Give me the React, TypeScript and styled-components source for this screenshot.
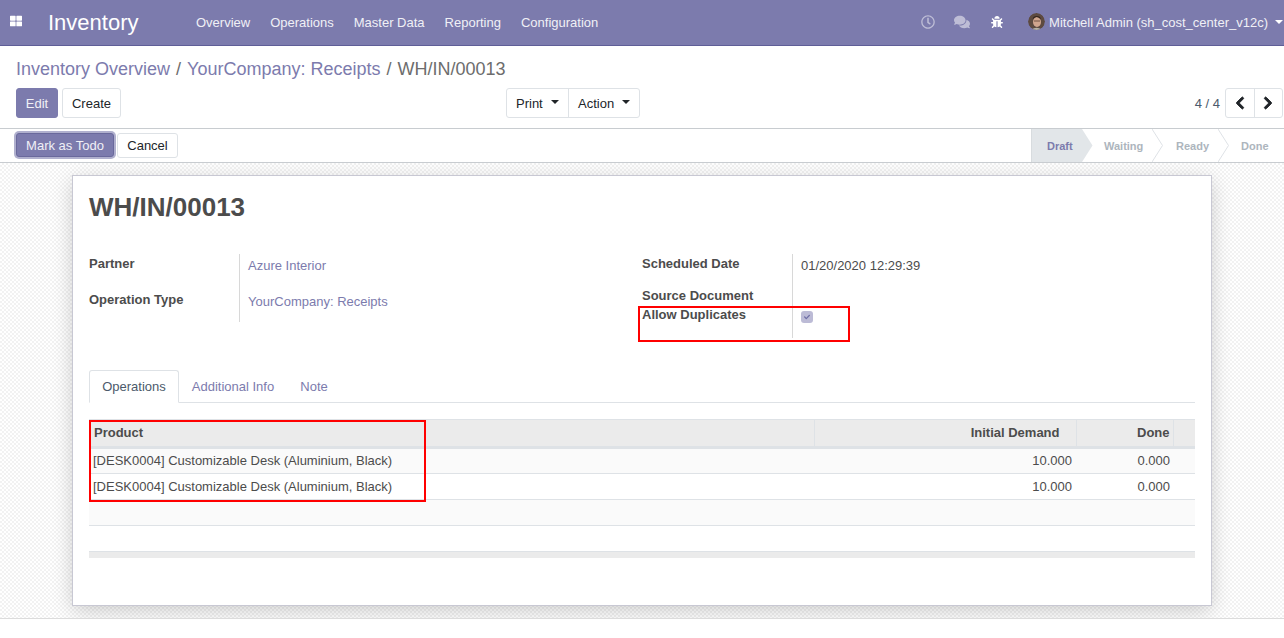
import React from "react";
import styled, { createGlobalStyle } from "styled-components";
import { FaThLarge, FaRegClock, FaComments, FaBug, FaChevronLeft, FaChevronRight, FaCheck } from "react-icons/fa";

const Global = createGlobalStyle`
  html, body { margin: 0; padding: 0; background: #fff; }
  body { font-family: "Liberation Sans", Arial, sans-serif; font-size: 13px; color: #4c4c4c; }
  * { box-sizing: border-box; }
`;

const Page = styled.div`
  width: 1284px; height: 638px; overflow: hidden; display: flex; flex-direction: column; position: relative;
`;
const Nav = styled.header`
  height: 46px; flex: none; background: #7c7bad; border-bottom: 1px solid #5f5e97; display: flex; align-items: center; color: #fff;
`;
const Apps = styled.span`
  width: 48px; padding-left: 10px; display: flex; align-items: center; font-size: 12px; margin-top: -3px;
`;
const Brand = styled.span`
  font-size: 22px; line-height: 45px; width: 148px;
`;
const Menu = styled.nav`
  display: flex; gap: 20px; font-size: 13px; color: #f0f0f6; margin-top: -1px;
`;
const NavRight = styled.div`
  margin-left: auto; display: flex; align-items: center; font-size: 13px;
`;
const SysIcon = styled.span<{ $dim?: boolean; $w: number; $size: number }>`
  width: ${p => p.$w}px; display: flex; align-items: center; font-size: ${p => p.$size}px; opacity: ${p => (p.$dim ? 0.5 : 1)}; margin-top: -2px;
`;
const Avatar = styled.svg`
  width: 17px; height: 17px; border-radius: 50%; margin-right: 4px; margin-top: -2px; flex: none;
`;
const UserName = styled.span`
  color: #f0f0f6; margin-top: -1px;
`;
const WhiteCaret = styled.span`
  width: 0; height: 0; border-left: 4px solid transparent; border-right: 4px solid transparent; border-top: 4px solid #fff;
  margin: -2px 1px 0 7px;
`;

const ControlPanel = styled.section`
  height: 83px; flex: none; border-bottom: 1px solid #c8ccd0; padding: 0 0 0 16px; display: flex; flex-direction: column;
`;
const Crumbs = styled.div`
  font-size: 18px; line-height: 21px; margin-top: 13px; display: flex; gap: 6px; color: #6d6d6d;
`;
const CrumbLink = styled.a`
  color: #7c7bad;
`;
const CpRow = styled.div`
  display: grid; grid-template-columns: 490px auto 1fr; align-items: center; margin-top: 8px; height: 30px;
`;
const BtnRow = styled.div`
  display: flex; gap: 4px;
`;
const Button = styled.button<{ $primary?: boolean; $w: number; $h?: number }>`
  font: 13px "Liberation Sans", Arial, sans-serif; width: ${p => p.$w}px; height: ${p => p.$h ?? 30}px; padding: 0;
  border-radius: 3px; border: 1px solid ${p => (p.$primary ? "#7c7bad" : "#dee2e6")};
  background: ${p => (p.$primary ? "#7c7bad" : "#fff")}; color: ${p => (p.$primary ? "#f0f0f6" : "#212529")};
`;
const FocusButton = styled(Button)`
  box-shadow: 0 0 0 2px rgba(124, 123, 173, 0.6); border-color: #6a699c; 
`;
const Group = styled.div`
  display: flex; border: 1px solid #dee2e6; border-radius: 3px; height: 30px; width: 134px;
`;
const DropItem = styled.div<{ $w: number; $split?: boolean }>`
  width: ${p => p.$w}px; display: flex; align-items: center; padding-left: 9px; color: #212529; border-left: ${p => (p.$split ? "1px solid #dee2e6" : "none")};
`;
const DarkCaret = styled.span`
  width: 0; height: 0; border-left: 4px solid transparent; border-right: 4px solid transparent; border-top: 4px solid #212529;
  margin: -3px 0 0 8px;
`;
const Pager = styled.div`
  justify-self: end; display: flex; align-items: center; margin-right: 1px; gap: 5px; color: #4c5a6b; 
`;
const PagerBtns = styled.div`
  display: flex; width: 58px; height: 30px; border: 1px solid #dee2e6; border-radius: 3px; color: #212529; font-size: 14px;
`;
const PagerBtn = styled.span<{ $split?: boolean }>`
  flex: 1; display: flex; align-items: center; justify-content: center; border-left: ${p => (p.$split ? "1px solid #dee2e6" : "none")};
  svg { stroke: currentColor; stroke-width: 36; }
`;

const StatusBar = styled.section`
  height: 34px; flex: none; border-bottom: 1px solid #c8ccd0; display: flex; justify-content: space-between; align-items: stretch; padding-left: 16px;
`;
const StatusBtns = styled.div`
  display: flex; gap: 3px; align-items: center; padding-bottom: 1px;
`;
const Steps = styled.div`
  display: flex;
`;
const Step = styled.div<{ $active?: boolean; $w: number; $pl: number }>`
  position: relative; width: ${p => p.$w}px; padding-left: ${p => p.$pl}px; display: flex; align-items: center; font-size: 11px; font-weight: bold;
  color: ${p => (p.$active ? "#7c7bad" : "#adb5bd")}; background: ${p => (p.$active ? "#e2e6e9" : "#fff")};
  border-left: ${p => (p.$active ? "1px solid #d8dcdf" : "none")};
`;
const Arrow = styled.svg`
  position: absolute; left: 100%; top: 0; width: 11px; height: 33px; z-index: 1;
`;

const Content = styled.main`
  height: 456px; flex: none; overflow: hidden; border-bottom: 1px solid #dcdcdc;
  background-color: #fff;
  background-image: conic-gradient(#f2f2f2 25%, #fff 0 50%, #f2f2f2 0 75%, #fff 0);
  background-size: 4px 4px;
  padding-top: 12px;
`;
const Sheet = styled.article`
  width: 1140px; height: 431px; margin-left: 72px; background: #fff; border: 1px solid #c8c8d3;
  box-shadow: 0 5px 20px -1px rgba(0, 0, 0, 0.2); padding: 0 16px; 
`;
const Title = styled.h1`
  margin: 15px 0 0; font-size: 26px; line-height: 32px; font-weight: bold; color: #4c4c4c; 
`;
const Columns = styled.div`
  display: grid; grid-template-columns: 553px 553px; margin-top: 31px; height: 116px;
`;
const Fields = styled.div`
  display: grid; grid-template-columns: 150px 1fr; align-content: start;
`;
const Label = styled.div<{ $h: number }>`
  height: ${p => p.$h}px; font-weight: bold; line-height: 19px; color: #4c4c4c;
`;
const Value = styled.div<{ $h: number; $link?: boolean }>`
  height: ${p => p.$h}px; border-left: 1px solid #d8d8d8; padding: 2px 0 0 8px; line-height: 19px; color: ${p => (p.$link ? "#7c7bad" : "#4c4c4c")};
`;
const CheckBox = styled.span`
  display: flex; align-items: center; justify-content: center; width: 12px; height: 12px; margin-top: 4px; border-radius: 3px;
  background: #bcbbd6; color: #6f6ea6; font-size: 6px;
`;
const Tabs = styled.div`
  display: flex; height: 33px; border-bottom: 1px solid #dee2e6;
`;
const Tab = styled.div<{ $active?: boolean; $w: number }>`
  width: ${p => p.$w}px; height: ${p => (p.$active ? 33 : 32)}px; display: flex; align-items: center; justify-content: center;
  color: ${p => (p.$active ? "#4c5a6b" : "#7c7bad")}; background: #fff;
  border: 1px solid ${p => (p.$active ? "#dee2e6" : "transparent")}; border-bottom: ${p => (p.$active ? "1px solid #fff" : "none")};
  border-radius: 3px 3px 0 0;
`;
const Table = styled.table`
  margin-top: 16px; width: 1106px; border-collapse: collapse; table-layout: fixed; color: #4c4c4c;
`;
const Th = styled.th<{ $w?: number; $right?: boolean; $noBorder?: boolean; $pl?: number; $pr?: number }>`
  width: ${p => (p.$w ? `${p.$w}px` : "auto")}; height: 28px; padding: 0 ${p => p.$pr ?? 4}px 2px ${p => p.$pl ?? 4}px; font-size: 13px; text-align: ${p => (p.$right ? "right" : "left")};
  background: #ebebeb; border-top: 1px solid #dee2e6; border-bottom: 3px solid #dee2e6;
  border-right: ${p => (p.$noBorder ? "none" : "1px solid #dee2e6")}; color: #4c4c4c;
`;
const Row = styled.tr<{ $odd?: boolean }>`
  height: 26px; background: ${p => (p.$odd ? "#fafafa" : "#fff")}; border-bottom: 1px solid #dee2e6;
  td { padding-bottom: ${p => (p.$odd ? 2 : 0)}px; }
`;
const Td = styled.td<{ $right?: boolean; $pr?: number }>`
  padding: 0 ${p => p.$pr ?? 4}px 0 4px; text-align: ${p => (p.$right ? "right" : "left")};
`;
const FootCell = styled.td`
  height: 6px; padding: 0; background: #ebebeb;
`;
const Mark = styled.div<{ $x: number; $y: number; $w: number; $h: number }>`
  position: absolute; left: ${p => p.$x}px; top: ${p => p.$y}px; width: ${p => p.$w}px; height: ${p => p.$h}px; border: 2px solid #f00; pointer-events: none;
`;

const StepArrow = ({ active }: { active?: boolean }) => (
  <Arrow viewBox="0 0 11 33">
    <path d="M0 0 L10.5 16.5 L0 33" fill={active ? "#e2e6e9" : "#fff"} stroke={active ? "none" : "#dee2e6"} strokeWidth="1" />
  </Arrow>
);

export default function App() {
  return (
    <Page>
      <Global />
      <Nav>
        <Apps><FaThLarge /></Apps>
        <Brand>Inventory</Brand>
        <Menu>
          <span>Overview</span><span>Operations</span><span>Master Data</span><span>Reporting</span><span>Configuration</span>
        </Menu>
        <NavRight>
          <SysIcon $dim $w={33} $size={14}><FaRegClock /></SysIcon>
          <SysIcon $dim $w={37} $size={16}><FaComments /></SysIcon>
          <SysIcon $w={37} $size={12}><FaBug /></SysIcon>
          <Avatar viewBox="0 0 17 17">
            <circle cx="8.5" cy="8.5" r="8.5" fill="#5d4a40" />
            <ellipse cx="9" cy="9" rx="4" ry="5" fill="#d0a58e" />
            <path d="M4.5 6.5 Q8.5 1.5 13 6.5 L12 4 Q8.5 2 5.5 4 Z" fill="#33241d" />
            <path d="M6 8 H12" stroke="#5b4034" strokeWidth="0.8" />
            <path d="M3 17 Q8.5 12.5 14 17 Z" fill="#b5b1a6" />
          </Avatar>
          <UserName>Mitchell Admin (sh_cost_center_v12c)</UserName>
          <WhiteCaret />
        </NavRight>
      </Nav>

      <ControlPanel>
        <Crumbs>
          <CrumbLink>Inventory Overview</CrumbLink><span>/</span>
          <CrumbLink>YourCompany: Receipts</CrumbLink><span>/</span>
          <span>WH/IN/00013</span>
        </Crumbs>
        <CpRow>
          <BtnRow>
            <Button $primary $w={42}>Edit</Button>
            <Button $w={59}>Create</Button>
          </BtnRow>
          <Group>
            <DropItem $w={61}>Print<DarkCaret /></DropItem>
            <DropItem $w={71} $split>Action<DarkCaret /></DropItem>
          </Group>
          <Pager>
            <span>4 / 4</span>
            <PagerBtns>
              <PagerBtn><FaChevronLeft /></PagerBtn>
              <PagerBtn $split><FaChevronRight /></PagerBtn>
            </PagerBtns>
          </Pager>
        </CpRow>
      </ControlPanel>

      <StatusBar>
        <StatusBtns>
          <FocusButton $primary $w={98} $h={24}>Mark as Todo</FocusButton>
          <Button $w={61} $h={25}>Cancel</Button>
        </StatusBtns>
        <Steps>
          <Step $active $w={51} $pl={15}>Draft<StepArrow active /></Step>
          <Step $w={70} $pl={22}>Waiting<StepArrow /></Step>
          <Step $w={66} $pl={24}>Ready<StepArrow /></Step>
          <Step $w={66} $pl={23}>Done</Step>
        </Steps>
      </StatusBar>

      <Content>
        <Sheet>
          <Title>WH/IN/00013</Title>
          <Columns>
            <Fields>
              <Label $h={36}>Partner</Label>
              <Value $h={36} $link>Azure Interior</Value>
              <Label $h={32}>Operation Type</Label>
              <Value $h={32} $link>YourCompany: Receipts</Value>
            </Fields>
            <Fields>
              <Label $h={32}>Scheduled Date</Label>
              <Value $h={32}>01/20/2020 12:29:39</Value>
              <Label $h={19}>Source Document</Label>
              <Value $h={19} />
              <Label $h={33}>Allow Duplicates</Label>
              <Value $h={33}><CheckBox><FaCheck /></CheckBox></Value>
            </Fields>
          </Columns>
          <Tabs>
            <Tab $active $w={90}>Operations</Tab>
            <Tab $w={108}>Additional Info</Tab>
            <Tab $w={54}>Note</Tab>
          </Tabs>
          <Table>
            <thead>
              <tr>
                <Th $w={725} $pl={5}>Product</Th>
                <Th $w={262} $right $pr={16}>Initial Demand</Th>
                <Th $w={97} $right $pr={3}>Done</Th>
                <Th $noBorder />
              </tr>
            </thead>
            <tbody>
              <Row $odd><Td>[DESK0004] Customizable Desk (Aluminium, Black)</Td><Td $right>10.000</Td><Td $right $pr={3}>0.000</Td><Td /></Row>
              <Row><Td>[DESK0004] Customizable Desk (Aluminium, Black)</Td><Td $right>10.000</Td><Td $right $pr={3}>0.000</Td><Td /></Row>
              <Row $odd><Td /><Td /><Td /><Td /></Row>
              <Row><Td /><Td /><Td /><Td /></Row>
            </tbody>
            <tfoot>
              <tr><FootCell colSpan={4} /></tr>
            </tfoot>
          </Table>
        </Sheet>
      </Content>
      <Mark $x={638} $y={306} $w={212} $h={36} />
      <Mark $x={89} $y={420} $w={337} $h={82} />
    </Page>
  );
}
